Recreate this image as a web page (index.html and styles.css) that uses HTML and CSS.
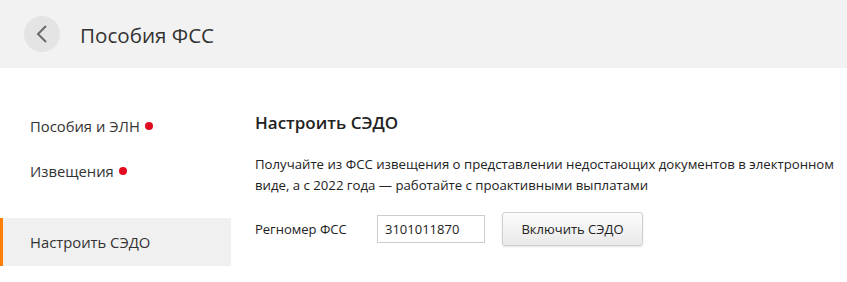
FILE: index.html
```html
<!DOCTYPE html>
<html lang="ru">
<head>
  <meta charset="UTF-8" />
  <title>Пособия ФСС</title>
  <link rel="stylesheet" href="styles.css">
</head>
<body>
  <header class="topbar">
    <button class="back-btn" aria-label="Назад">
      <svg viewBox="0 0 36 36" width="36" height="36">
        <path d="M22 10 L14 18 L22 26" fill="none" stroke="#6b6b6b" stroke-width="2"/>
      </svg>
    </button>
    <h1 class="page-title">Пособия ФСС</h1>
  </header>

  <div class="layout">
    <nav class="sidebar">
      <a class="nav-item">Пособия и ЭЛН <span class="dot"></span></a>
      <a class="nav-item">Извещения <span class="dot"></span></a>
      <a class="nav-item active">Настроить СЭДО</a>
    </nav>

    <main class="content">
      <h2 class="heading">Настроить СЭДО</h2>
      <p class="desc">Получайте из ФСС извещения о представлении недостающих документов в электронном виде, а с 2022 года — работайте с проактивными выплатами</p>
      <div class="form-row">
        <label class="label" for="regnum">Регномер ФСС</label>
        <input class="field" id="regnum" type="text" value="3101011870">
        <button class="btn">Включить СЭДО</button>
      </div>
    </main>
  </div>
</body>
</html>
```

FILE: styles.css
```css
* {
  margin: 0;
  padding: 0;
  box-sizing: border-box;
}

body {
  font-family: 'Open Sans', 'Noto Sans', sans-serif;
  color: #222;
  background: #fff;
}

.topbar {
  height: 68px;
  background: #f2f2f2;
  display: flex;
  align-items: center;
  padding-left: 24px;
  gap: 20px;
}

.back-btn {
  width: 36px;
  height: 36px;
  border: none;
  border-radius: 50%;
  background: #e4e4e4;
  display: flex;
  align-items: center;
  justify-content: center;
  cursor: pointer;
}

.page-title {
  font-size: 20.6px;
  font-weight: normal;
  color: #333;
  margin-top: 1px;
}

.layout {
  display: flex;
  padding-top: 35px;
}

.sidebar {
  width: 231px;
  flex-shrink: 0;
  display: flex;
  flex-direction: column;
}

.nav-item {
  height: 45px;
  display: flex;
  align-items: center;
  padding-left: 30px;
  font-size: 14.8px;
  color: #333;
  cursor: pointer;
}

.nav-item.active {
  margin-top: 25px;
  height: 48px;
  background: #f0f0f0;
  border-left: 3px solid #ff8000;
  padding-left: 27px;
}

.dot {
  width: 8px;
  height: 8px;
  border-radius: 50%;
  background: #e00b1f;
  margin-left: 5px;
  margin-top: 1px;
}

.content {
  padding-left: 24px;
  padding-top: 8px;
}

.heading {
  font-size: 17px;
  line-height: 23px;
  font-weight: 600;
  color: #222;
}

.desc {
  margin-top: 20px;
  font-size: 13.2px;
  line-height: 21px;
  color: #222;
  max-width: 600px;
}

.form-row {
  display: flex;
  align-items: center;
  margin-top: 16px;
}

.label {
  font-size: 13px;
  width: 122px;
  color: #222;
}

.field {
  width: 108px;
  height: 28px;
  border: 1px solid #ccc;
  padding: 0 7px;
  font-family: inherit;
  font-size: 13px;
  color: #222;
}

.btn {
  margin-left: 17px;
  width: 141px;
  height: 34px;
  border: 1px solid #cfcfcf;
  border-radius: 3px;
  background: linear-gradient(#fcfcfc, #e9e9e9);
  box-shadow: 0 1px 2px rgba(0,0,0,.12);
  font-family: inherit;
  font-size: 13px;
  color: #222;
  cursor: pointer;
}
```
